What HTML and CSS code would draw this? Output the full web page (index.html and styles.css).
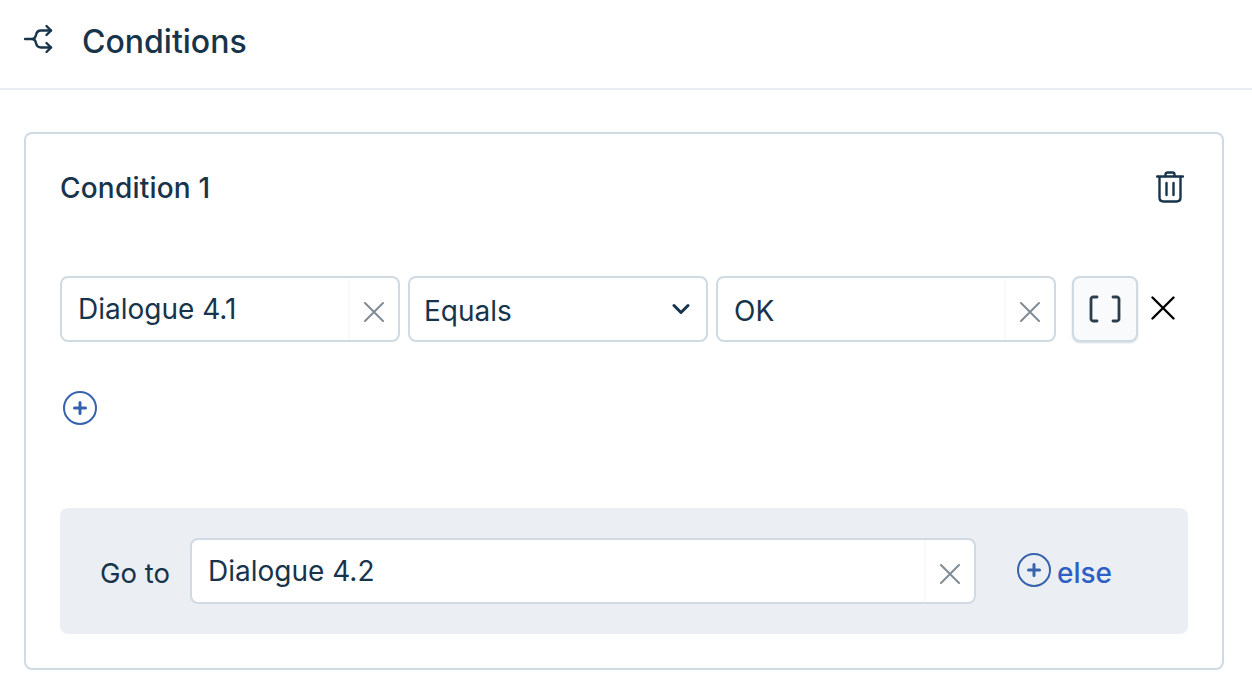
FILE: index.html
```html
<!DOCTYPE html>
<html lang="en">

<head>
    <meta charset="UTF-8">
    <title>Conditions</title>
    <link rel="stylesheet" href="styles.css">
</head>

<body>
    <div class="header">
        <svg class="header-icon" width="32" height="32" viewBox="0 0 32 32" fill="none" stroke="#17344b" stroke-width="2.4" stroke-linecap="round" stroke-linejoin="round">
            <path d="M1 15H8.5C11 15 11.500 13 12 11C12.500 8.500 14 6.500 17 6.500H27"/>
            <path d="M8.500 15C11 15 11.500 17 12 19C12.500 21.500 14 23.500 17 23.500H27"/>
            <path d="M22.500 2L27 6.500L22.500 11"/>
            <path d="M22.500 19L27 23.500L22.500 28"/>
        </svg>
        <h1 class="header-title">Conditions</h1>
    </div>

    <div class="card">
        <div class="card-head">
            <h2 class="card-title">Condition 1</h2>
            <svg class="trash" width="28" height="32" viewBox="0 0 28 32" fill="none" stroke="#17344b" stroke-width="2.400" stroke-linecap="round" stroke-linejoin="round">
                <path d="M1 5.500H27"/>
                <path d="M9.500 5V3.500C9.500 2 10.500 1.500 11.500 1.500H16.500C17.500 1.500 18.500 2 18.500 3.500V5"/>
                <path d="M3.500 6V26.500C3.500 29 5 30.500 7.500 30.500H20.500C23 30.500 24.500 29 24.500 26.500V6"/>
                <path d="M10.500 12V24"/>
                <path d="M17.500 12V24"/>
            </svg>
        </div>

        <div class="rule">
            <div class="field field-first">
                <span class="field-text field-text-high">Dialogue 4.1</span>
                <span class="field-clear">
                    <svg width="20" height="20" viewBox="0 0 20 20" stroke="#7f8c96" stroke-width="2" stroke-linecap="round"><path d="M1 1L19 19M19 1L1 19"/></svg>
                </span>
            </div>
            <div class="field field-select">
                <span class="field-text field-text-low">Equals</span>
                <svg class="chevron" width="18" height="12" viewBox="0 0 18 12" fill="none" stroke="#17344b" stroke-width="3" stroke-linecap="round" stroke-linejoin="round"><path d="M2 2.500L9 9.500L16 2.500"/></svg>
            </div>
            <div class="field field-value">
                <span class="field-text field-text-low">OK</span>
                <span class="field-clear">
                    <svg width="20" height="20" viewBox="0 0 20 20" stroke="#7f8c96" stroke-width="2" stroke-linecap="round"><path d="M1 1L19 19M19 1L1 19"/></svg>
                </span>
            </div>
            <div class="var-btn">
                <svg width="32" height="28" viewBox="0 0 32 28" fill="none" stroke="#2c3e4e" stroke-width="2.800" stroke-linecap="round" stroke-linejoin="round">
                    <path d="M8 2H4C3 2 2 3 2 4V24C2 25 3 26 4 26H8"/>
                    <path d="M24 2H28C29 2 30 3 30 4V24C30 25 29 26 28 26H24"/>
                </svg>
            </div>
            <svg class="rule-remove" width="24" height="24" viewBox="0 0 24 24" stroke="#000" stroke-width="2.400" stroke-linecap="round"><path d="M1.500 1.500L22.500 22.500M22.500 1.500L1.500 22.500"/></svg>
        </div>

        <svg class="add-icon add-rule" width="36" height="36" viewBox="0 0 36 36" fill="none" stroke="#3763ad" stroke-linecap="round">
            <circle cx="18" cy="18" r="16" stroke-width="2"/>
            <path d="M18 12.500V23.500M12.500 18H23.500" stroke-width="3"/>
        </svg>

        <div class="goto">
            <span class="goto-label">Go to</span>
            <div class="field field-goto">
                <span class="field-text field-text-high">Dialogue 4.2</span>
                <span class="field-clear">
                    <svg width="20" height="20" viewBox="0 0 20 20" stroke="#7f8c96" stroke-width="2" stroke-linecap="round"><path d="M1 1L19 19M19 1L1 19"/></svg>
                </span>
            </div>
            <div class="else-btn">
                <svg class="add-icon" width="36" height="36" viewBox="0 0 36 36" fill="none" stroke="#3763ad" stroke-linecap="round">
                    <circle cx="18" cy="18" r="16" stroke-width="2"/>
                    <path d="M18 12.500V23.500M12.500 18H23.500" stroke-width="3"/>
                </svg>
                <span class="else-text">else</span>
            </div>
        </div>
    </div>
</body>

</html>
```

FILE: styles.css
```css
body {
    margin: 0;
    padding: 0;
    background-color: #fff;
    color: #17344b;
    font-family: "Inter", "Liberation Sans", sans-serif;
}

.header {
    display: flex;
    align-items: center;
    height: 88px;
    padding-left: 24px;
    border-bottom: 2px solid #e8edf2;
    box-sizing: content-box;
}

.header-icon {
    margin-top: -9px;
}

.header-title {
    margin: -5px 0 0 26px;
    font-size: 32px;
    font-weight: 500;
}

.card {
    width: 1128px;
    height: 534px;
    margin: 42px 0 0 24px;
    padding: 0 34px;
    border: 2px solid #d0dae3;
    border-radius: 8px;
}

.card-head {
    display: flex;
    justify-content: space-between;
    align-items: center;
    height: 108px;
    padding-right: 2px;
}

.card-title {
    margin: 0;
    font-size: 28px;
    font-weight: 500;
    letter-spacing: 0.2px;
}

.trash {
    margin-right: 2px;
    margin-top: -3px;
}

.rule {
    display: flex;
    margin-top: 34px;
}

.field {
    display: flex;
    align-items: center;
    justify-content: space-between;
    box-sizing: border-box;
    height: 66px;
    border: 2px solid #d0dae3;
    border-radius: 8px;
    background-color: #fff;
}

.field-first {
    width: 340px;
}

.field-select {
    width: 300px;
    margin-left: 8px;
    padding-right: 16px;
}

.field-select .field-text {
    padding-left: 14px;
    margin-top: 4px;
}

.field-value {
    width: 340px;
    margin-left: 8px;
}

.field-text {
    padding-left: 16px;
    font-size: 28px;
    line-height: 32px;
}

.field-text-high {
    margin-top: -1px;
}

.field-text-low {
    margin-top: 3px;
}

.field-clear {
    display: flex;
    align-items: center;
    justify-content: center;
    align-self: stretch;
    width: 50px;
    padding-top: 6px;
    box-sizing: border-box;
    border-left: 2px solid #f8f9fa;
}

.var-btn {
    display: flex;
    align-items: center;
    justify-content: center;
    box-sizing: border-box;
    width: 66px;
    height: 66px;
    margin-left: 16px;
    border: 2px solid #d0dae3;
    border-radius: 8px;
    background-color: #f8fafc;
    box-shadow: 0 1px 2px #d0dae3;
}

.rule-remove {
    margin: 20px 0 0 13px;
}

.add-icon {
    display: block;
}

.add-rule {
    margin: 48px 0 0 2px;
}

.goto {
    display: flex;
    align-items: center;
    height: 126px;
    margin-top: 82px;
    padding-left: 40px;
    border-radius: 8px;
    background-color: #ebeef3;
}

.goto-label {
    margin-top: 4px;
    font-size: 27.500px;
}

.field-goto {
    width: 786px;
    margin: 0 0 0 20px;
}

.else-btn {
    display: flex;
    align-items: center;
    margin-left: 40px;
}

.else-btn .add-icon {
    margin-top: -3px;
}

.else-text {
    margin: 4px 0 0 5px;
    color: #2f5fc4;
    font-size: 28px;
    font-weight: 500;
}
```
